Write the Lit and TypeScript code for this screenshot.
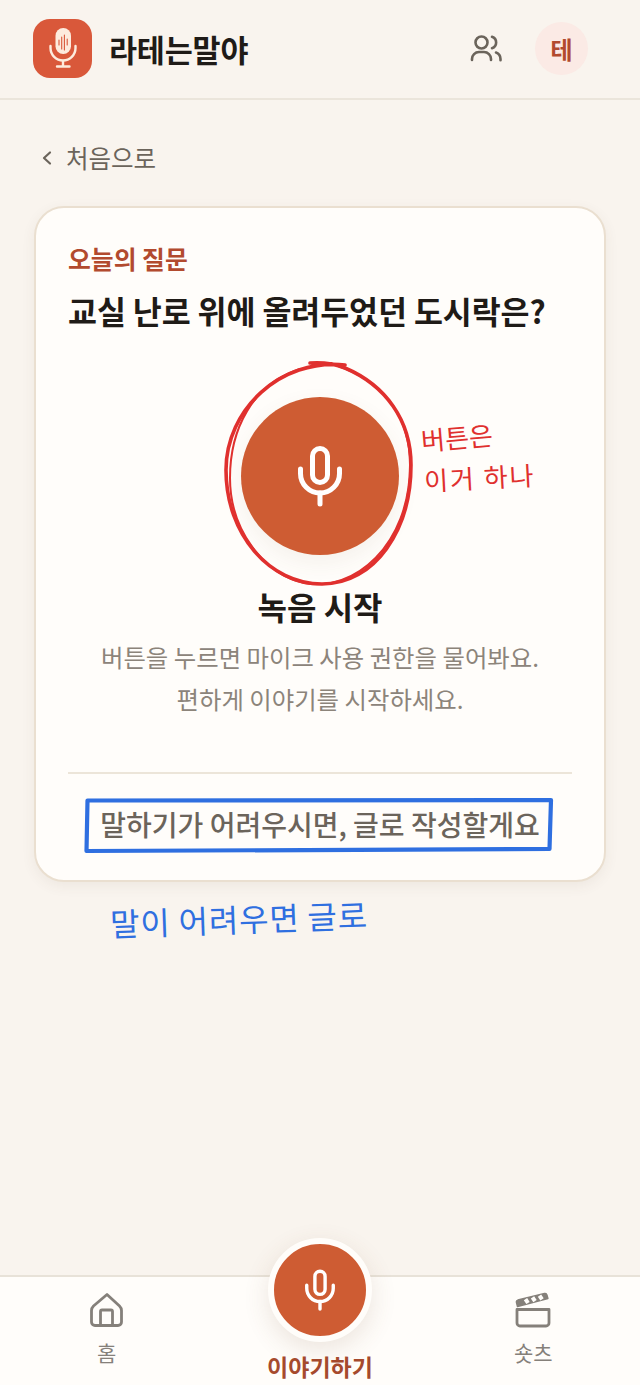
import { LitElement, html, css, svg } from "lit";
import { customElement } from "lit/decorators.js";

const mic = svg`<rect x="17.5" y="4.5" width="15" height="34" rx="7.5"/><path d="M5.5 25v4.5a19.5 19.5 0 0 0 39 0V25"/><path d="M25 49v11"/>`;

@customElement("app-root")
export class AppRoot extends LitElement {
  static styles = css`
    :host { display: block; width: 640px; height: 1385px; background: #f9f4ee; font-family: "Noto Sans CJK KR", "Noto Sans", sans-serif; color: #1f1b17; overflow: hidden; position: relative; }
    * { box-sizing: border-box; }
    .page { height: 1385px; display: flex; flex-direction: column; }
    header { height: 100px; flex: none; border-bottom: 2px solid #ebe5db; display: flex; align-items: center; padding: 0 52px 2px 33px; }
    .logo { width: 59px; height: 59px; border-radius: 17px; background: #d9583a; display: flex; align-items: center; justify-content: center; }
    .logo svg { width: 40px; height: 40px; }
    .title { margin-left: 17px; margin-top: 2px; font-size: 30.5px; font-weight: 700; letter-spacing: -0.2px; line-height: 1; }
    .spacer { flex: 1; }
    .friends { width: 34px; height: 34px; color: #6b645b; margin-right: 31px; }
    .avatar { width: 53px; height: 53px; border-radius: 50%; background: #fbeae5; color: #b24a2e; font-size: 24px; font-weight: 700; display: flex; align-items: center; justify-content: center; }
    main { flex: 1; padding: 0 34px; display: flex; flex-direction: column; }
    .back { height: 28px; margin-top: 44px; display: flex; align-items: center; gap: 12px; color: #6b645b; font-size: 24.5px; line-height: 1; padding-left: 6px; }
    .back svg { width: 14px; height: 18px; }
    .card { margin-top: 34px; height: 676px; background: #fffdfa; border: 2px solid #eadfd0; border-radius: 30px; box-shadow: 0 4px 14px rgba(90,70,50,.07); padding: 30px 32px 0; display: flex; flex-direction: column; }
    .eyebrow { font-size: 24.8px; font-weight: 700; color: #b24a2e; line-height: 40px; height: 40px; white-space: nowrap; }
    .question { margin-top: 12px; font-size: 31.5px; font-weight: 700; line-height: 40px; letter-spacing: -0.1px; white-space: nowrap; }
    .rec { align-self: center; margin-top: 67px; width: 158px; height: 158px; border-radius: 50%; background: #ce5c33; box-shadow: 0 8px 22px rgba(120,80,50,.07); display: flex; align-items: center; justify-content: center; color: #fff; flex: none; }
    .rec svg { width: 50px; height: 64px; }
    .rec-title { margin-top: 30px; text-align: center; font-size: 32px; font-weight: 700; line-height: 42px; }
    .hint { margin-top: 9px; text-align: center; font-size: 24.4px; line-height: 42px; color: #8c847a; white-space: nowrap; }
    .divider { margin-top: 52px; height: 2px; background: #ece5d9; flex: none; }
    .write { margin-top: 25px; text-align: center; font-size: 28px; font-weight: 500; line-height: 50px; color: #6b645b; white-space: nowrap; }
    nav { height: 110px; flex: none; background: #fffdfa; border-top: 2px solid #e8e2d8; display: grid; grid-template-columns: 1fr 1fr 1fr; position: relative; }
    .tab { display: flex; flex-direction: column; align-items: center; padding-top: 14px; color: #85807a; font-size: 21px; line-height: 30px; }
    .tab svg { width: 40px; height: 40px; margin-bottom: 6px; }
    .tab.center { color: #a64a2d; font-weight: 700; font-size: 23px; padding-top: 74px; }
    .fab { position: absolute; left: 268px; top: -39px; width: 104px; height: 104px; border-radius: 50%; background: #ce5c33; border: 6px solid #fffdfa; box-shadow: 0 8px 26px rgba(120,80,50,.14); display: flex; align-items: center; justify-content: center; color: #fff; }
    .fab svg { width: 34px; height: 44px; }
    .ink { position: absolute; left: 0; top: 0; width: 640px; height: 1385px; pointer-events: none; }
    .note { position: absolute; white-space: nowrap; line-height: 1; }
    .red { color: #e0302e; font-size: 26px; font-weight: 400; }
    .blue { color: #2f6fe0; font-size: 32px; font-weight: 400; }
    .n1 { left: 421px; top: 424px; transform: rotate(-5deg); }
    .n2 { left: 424px; top: 464px; transform: rotate(-3deg); letter-spacing: 2px; }
    .n3 { left: 110px; top: 902px; transform: rotate(-2deg); letter-spacing: 0.8px; }
  `;

  render() {
    return html`
      <div class="page">
        <header>
          <div class="logo">
            <svg viewBox="0 0 40 40" fill="none" stroke-linecap="round">
              <rect x="12.5" y="0" width="15.5" height="26" rx="7.7" fill="#fdebdd"/>
              <path d="M7.5 18v2a12.5 12.5 0 0 0 25 0v-2" stroke="#fdebdd" stroke-width="2.4"/>
              <path d="M20 33v5M14 38.5h12.5" stroke="#fdebdd" stroke-width="2.4"/>
              <path d="M16 12v5M18.7 9v12M21.4 7v15M24.2 11v6" stroke="#d9583a" stroke-width="1.1"/>
            </svg>
          </div>
          <div class="title">라테는말야</div>
          <div class="spacer"></div>
          <svg class="friends" viewBox="0 0 34 34" fill="none" stroke="currentColor" stroke-width="2.6" stroke-linecap="round">
            <circle cx="11.5" cy="11.5" r="6"/>
            <path d="M2 29v-1a7 7 0 0 1 7-7h5a7 7 0 0 1 7 7v1"/>
            <path d="M22 5.8a6 6 0 0 1 0 11.4"/>
            <path d="M26 21.5a7 7 0 0 1 4.5 6.5v1.2"/>
          </svg>
          <div class="avatar">테</div>
        </header>
        <main>
          <div class="back">
            <svg viewBox="0 0 14 18" fill="none" stroke="currentColor" stroke-width="2.2" stroke-linecap="round" stroke-linejoin="round"><path d="M10 3.5 4 9l6 5.5"/></svg>
            <span>처음으로</span>
          </div>
          <section class="card">
            <div class="eyebrow">오늘의 질문</div>
            <div class="question">교실 난로 위에 올려두었던 도시락은?</div>
            <div class="rec"><svg viewBox="0 0 50 64" fill="none" stroke="currentColor" stroke-width="5" stroke-linecap="round">${mic}</svg></div>
            <div class="rec-title">녹음 시작</div>
            <div class="hint">버튼을 누르면 마이크 사용 권한을 물어봐요.<br>편하게 이야기를 시작하세요.</div>
            <div class="divider"></div>
            <div class="write">말하기가 어려우시면, 글로 작성할게요</div>
          </section>
        </main>
        <nav>
          <div class="tab">
            <svg viewBox="0 0 40 40" fill="none" stroke="currentColor" stroke-width="2.8" stroke-linejoin="round"><path d="M20 3.5 32.5 15q2 2 2 4.5V31a3.5 3.5 0 0 1-3.5 3.5H8A3.5 3.5 0 0 1 4.5 31V19.5q0-2.5 2-4.5z"/><path d="M13.5 34.5V20.5a1.5 1.5 0 0 1 1.5-1.5h9a1.5 1.5 0 0 1 1.5 1.5v14"/></svg>
            <span>홈</span>
          </div>
          <div class="tab center"><span>이야기하기</span></div>
          <div class="tab">
            <svg viewBox="0 0 40 40" fill="none" stroke="currentColor" stroke-width="2.8" stroke-linejoin="round"><path d="M4 18.5h32V32a3 3 0 0 1-3 3H7a3 3 0 0 1-3-3z"/><path d="M3.5 11.5a2 2 0 0 1 1.4-2.4L31.5 2.5a2 2 0 0 1 2.4 1.4l1 3.6L4.5 15.5z" fill="currentColor" stroke-width="1.5"/><path d="M12.5 8.2 15 12M19.5 6.4 22 10.2M26.5 4.6 29 8.4" stroke="#fffdfa" stroke-width="4" stroke-linejoin="miter"/></svg>
            <span>숏츠</span>
          </div>
          <div class="fab"><svg viewBox="0 0 50 64" fill="none" stroke="currentColor" stroke-width="5" stroke-linecap="round">${mic}</svg></div>
        </nav>
      </div>
      <svg class="ink" viewBox="0 0 640 1385" fill="none">
        <g stroke="#e0302e" stroke-linecap="round">
          <path stroke-width="3.6" d="M345 365C280 358 226 410 226 470c0 65 44 114 96 114 53 0 89-54 89-119 0-45-26-80-66-97-10-4-22-6-35-5"/>
          <path stroke-width="2" d="M300 369C252 384 230 430 230 478c0 52 34 96 74 105 50 10 106-38 106-118 0-50-28-84-72-99"/>
        </g>
        <path stroke="#2f6fe0" stroke-width="4.2" stroke-linejoin="round" d="M87.5 800.5 551 800 549.5 849 86.500 851z"/>
      </svg>
      <div class="note red n1">버튼은</div>
      <div class="note red n2">이거 하나</div>
      <div class="note blue n3">말이 어려우면 글로</div>
    `;
  }
}
